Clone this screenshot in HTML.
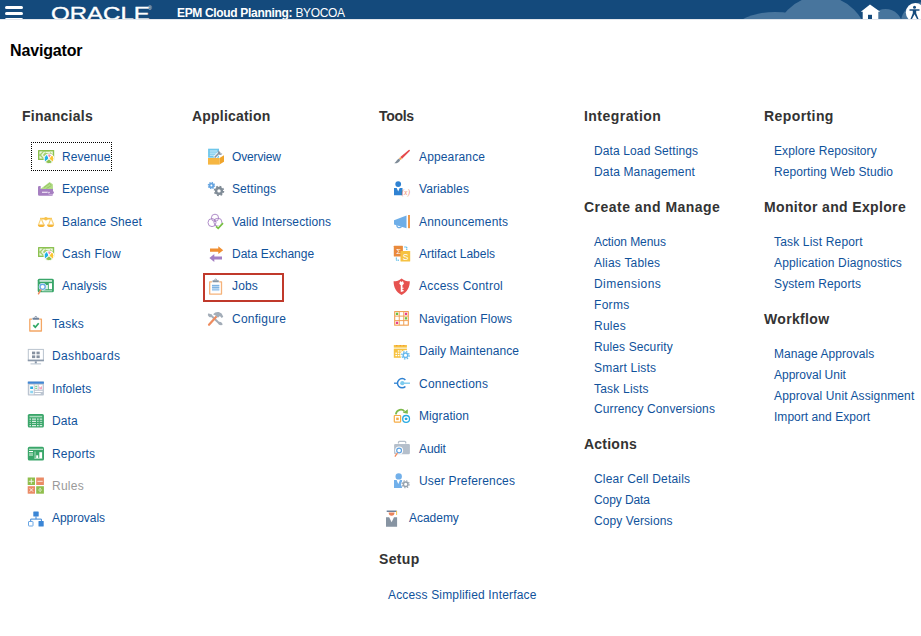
<!DOCTYPE html>
<html><head><meta charset="utf-8"><title>Navigator</title>
<style>
html,body{margin:0;padding:0;background:#fff;}
body{width:921px;height:636px;position:relative;overflow:hidden;font-family:"Liberation Sans",Arial,sans-serif;}
.hdr{position:absolute;left:0;top:0;width:921px;height:19px;background:#144a7c;overflow:hidden;}
.l{position:absolute;font-size:12px;line-height:14px;color:#10529b;white-space:nowrap;}
.d{color:#9a9a9a;}
.h{position:absolute;font-size:14px;line-height:16px;font-weight:bold;color:#333;white-space:nowrap;}
.nav{position:absolute;left:10px;top:42px;letter-spacing:-0.150px;font-size:16px;line-height:18px;font-weight:bold;color:#000;}
.ht{position:absolute;top:5.500px;left:177px;font-size:12px;line-height:14px;color:#fff;white-space:nowrap;}
.ht b{font-weight:bold;letter-spacing:-0.33px;}
.ht span{position:absolute;left:118.400px;top:0;letter-spacing:-0.35px;}
.logo{position:absolute;left:50.500px;top:4.600px;font-size:18px;line-height:19px;color:#fff;transform-origin:0 0;transform:scale(1.335,1);white-space:nowrap;-webkit-text-stroke:0.350px #fff;}
.reg{position:absolute;left:148px;top:5px;font-size:5px;line-height:6px;color:#fff;}
.focus{position:absolute;left:31px;top:142px;width:79px;height:27px;border:1px dotted #000;}
.sel{position:absolute;left:203px;top:273px;width:77px;height:25px;border:2px solid #c0392b;box-sizing:content-box;}
svg.i{position:absolute;overflow:visible;}
</style></head><body>
<div class="hdr">
<svg width="921" height="19" viewBox="0 0 921 19" style="position:absolute;left:0;top:0">
<g fill="#48759d">
<ellipse cx="775" cy="31" rx="41" ry="19"/>
<circle cx="821" cy="42.800" r="46.900"/>
<circle cx="885.500" cy="26" r="17"/>
<ellipse cx="925" cy="22" rx="24" ry="20"/>
</g>
<g fill="#fff">
<rect x="5" y="6" width="18" height="3" rx="1.500"/>
<rect x="5" y="12" width="18" height="3" rx="1.500"/>
<rect x="5" y="18" width="18" height="3" rx="1.500"/>
<path d="M870 4.500 860.800 11.800h1.900V19h15.600v-7.200h1.900z"/>
<circle cx="915.300" cy="12.500" r="9.500"/>
</g>
<rect x="868" y="14.800" width="4" height="4.200" fill="#144a7c"/>
<g fill="#144a7c" stroke="none">
<circle cx="914.500" cy="7.200" r="1.500"/>
<path d="M909.500 9.300h10v1.400h-3.300v2.600l2.300 5.700h-1.500l-2.500-4.800-2.500 4.800h-1.500l2.300-5.700v-2.600h-3.300z"/>
</g>
</svg>
<div class="logo">ORACLE</div><div class="reg">®</div>
<div class="ht"><b>EPM Cloud Planning:</b> <span>BYOCOA</span></div>
</div>
<div style="position:absolute;left:0;top:19px;width:921px;height:1px;background:#e3e7ed"></div>
<div class="nav">Navigator</div>
<div class="focus"></div>
<div class="sel"></div>
<div class="h" style="left:22px;top:108px;letter-spacing:0.248px">Financials</div>
<div class="l" style="left:62px;top:150px;letter-spacing:0.050px">Revenue</div>
<div class="l" style="left:62px;top:182px;letter-spacing:0.076px">Expense</div>
<div class="l" style="left:62px;top:215px;letter-spacing:0.149px">Balance Sheet</div>
<div class="l" style="left:62px;top:247px;letter-spacing:0.248px">Cash Flow</div>
<div class="l" style="left:62px;top:279px;letter-spacing:0.022px">Analysis</div>
<div class="l" style="left:52px;top:317px;letter-spacing:0.249px">Tasks</div>
<div class="l" style="left:52px;top:349px;letter-spacing:0.361px">Dashboards</div>
<div class="l" style="left:52px;top:382px;letter-spacing:0.068px">Infolets</div>
<div class="l" style="left:52px;top:414px;letter-spacing:0.096px">Data</div>
<div class="l" style="left:52px;top:447px;letter-spacing:0.173px">Reports</div>
<div class="l d" style="left:52px;top:479px;letter-spacing:0.264px">Rules</div>
<div class="l" style="left:52px;top:511px;letter-spacing:-0.031px">Approvals</div>
<div class="h" style="left:192px;top:108px;letter-spacing:0.198px">Application</div>
<div class="l" style="left:232px;top:150px;letter-spacing:-0.155px">Overview</div>
<div class="l" style="left:232px;top:182px;letter-spacing:0.080px">Settings</div>
<div class="l" style="left:232px;top:215px;letter-spacing:0.103px">Valid Intersections</div>
<div class="l" style="left:232px;top:247px;letter-spacing:0.007px">Data Exchange</div>
<div class="l" style="left:232px;top:279px;letter-spacing:0.163px">Jobs</div>
<div class="l" style="left:232px;top:312px;letter-spacing:0.246px">Configure</div>
<div class="h" style="left:379px;top:108px;letter-spacing:-0.283px">Tools</div>
<div class="l" style="left:419px;top:150px;letter-spacing:0.138px">Appearance</div>
<div class="l" style="left:419px;top:182px;letter-spacing:0.094px">Variables</div>
<div class="l" style="left:419px;top:215px;letter-spacing:0.192px">Announcements</div>
<div class="l" style="left:419px;top:247px;letter-spacing:0.006px">Artifact Labels</div>
<div class="l" style="left:419px;top:279px;letter-spacing:0.232px">Access Control</div>
<div class="l" style="left:419px;top:312px;letter-spacing:0.115px">Navigation Flows</div>
<div class="l" style="left:419px;top:344px;letter-spacing:0.081px">Daily Maintenance</div>
<div class="l" style="left:419px;top:377px;letter-spacing:0.228px">Connections</div>
<div class="l" style="left:419px;top:409px;letter-spacing:0.085px">Migration</div>
<div class="l" style="left:419px;top:442px;letter-spacing:-0.120px">Audit</div>
<div class="l" style="left:419px;top:474px;letter-spacing:0.169px">User Preferences</div>
<div class="l" style="left:409px;top:511px;letter-spacing:-0.027px">Academy</div>
<div class="h" style="left:379px;top:551px;letter-spacing:0.328px">Setup</div>
<div class="l" style="left:388px;top:588px;letter-spacing:0.165px">Access Simplified Interface</div>
<div class="h" style="left:584px;top:108px;letter-spacing:0.457px">Integration</div>
<div class="l" style="left:594px;top:144px;letter-spacing:0.120px">Data Load Settings</div>
<div class="l" style="left:594px;top:165px;letter-spacing:0.152px">Data Management</div>
<div class="h" style="left:584px;top:199px;letter-spacing:0.470px">Create and Manage</div>
<div class="l" style="left:594px;top:235px;letter-spacing:-0.074px">Action Menus</div>
<div class="l" style="left:594px;top:256px;letter-spacing:0.209px">Alias Tables</div>
<div class="l" style="left:594px;top:277px;letter-spacing:0.453px">Dimensions</div>
<div class="l" style="left:594px;top:298px;letter-spacing:0.301px">Forms</div>
<div class="l" style="left:594px;top:319px;letter-spacing:0.264px">Rules</div>
<div class="l" style="left:594px;top:340px;letter-spacing:0.102px">Rules Security</div>
<div class="l" style="left:594px;top:361px;letter-spacing:0.199px">Smart Lists</div>
<div class="l" style="left:594px;top:382px;letter-spacing:0.200px">Task Lists</div>
<div class="l" style="left:594px;top:402px;letter-spacing:0.114px">Currency Conversions</div>
<div class="h" style="left:584px;top:436px;letter-spacing:0.227px">Actions</div>
<div class="l" style="left:594px;top:472px;letter-spacing:0.197px">Clear Cell Details</div>
<div class="l" style="left:594px;top:493px;letter-spacing:-0.082px">Copy Data</div>
<div class="l" style="left:594px;top:514px;letter-spacing:0.085px">Copy Versions</div>
<div class="h" style="left:764px;top:108px;letter-spacing:0.412px">Reporting</div>
<div class="l" style="left:774px;top:144px;letter-spacing:0.077px">Explore Repository</div>
<div class="l" style="left:774px;top:165px;letter-spacing:0.088px">Reporting Web Studio</div>
<div class="h" style="left:764px;top:199px;letter-spacing:0.353px">Monitor and Explore</div>
<div class="l" style="left:774px;top:235px;letter-spacing:0.173px">Task List Report</div>
<div class="l" style="left:774px;top:256px;letter-spacing:0.171px">Application Diagnostics</div>
<div class="l" style="left:774px;top:277px;letter-spacing:0.123px">System Reports</div>
<div class="h" style="left:764px;top:311px;letter-spacing:0.330px">Workflow</div>
<div class="l" style="left:774px;top:347px;letter-spacing:0.054px">Manage Approvals</div>
<div class="l" style="left:774px;top:368px;letter-spacing:-0.009px">Approval Unit</div>
<div class="l" style="left:774px;top:389px;letter-spacing:0.124px">Approval Unit Assignment</div>
<div class="l" style="left:774px;top:410px;letter-spacing:0.040px">Import and Export</div>
<svg class="i" width="921" height="636" viewBox="0 0 921 636" style="left:0;top:0">
<defs>
<g id="money">
<rect x="0" y="0" width="16.200" height="10" rx="0.500" fill="#8cc152"/>
<rect x="1.200" y="1.200" width="13.800" height="7.600" fill="#a4d070"/>
<path d="M1.500 1.600h3.200l-3.200 3zM14.700 1.600v3l-3.200-3zM1.500 8.400v-3l3.200 3z" fill="#eef7e2"/>
<path d="M6.600 2 4 5 6.600 8M7.500 2.300h4.500" stroke="#eef7e2" stroke-width="1.300" fill="none"/>
<circle cx="11" cy="8.800" r="5.300" fill="#fff"/>
<g stroke="#fff" stroke-width="0.900" stroke-linejoin="round">
<path d="M11 8.800 9.400 4.300A4.800 4.800 0 0 0 7.300 11.900z" fill="#1fb0e6"/>
<path d="M11 8.800 9.400 4.300A4.800 4.800 0 0 1 13.800 4.900z" fill="#f48fb1"/>
<path d="M11 8.800 13.800 4.900A4.800 4.800 0 0 1 14.500 12.100z" fill="#fbc531"/>
<path d="M11 8.800 14.500 12.100A4.800 4.800 0 0 1 7.300 11.900z" fill="#8cc152"/>
</g>
</g>
</defs>
<!-- Revenue -->
<use href="#money" x="38" y="150"/>
<!-- Expense -->
<g>
<path d="M40.800 188.800 49.600 181.900 52.800 184.300 53 189.500H40.800z" fill="#b2db88"/>
<path d="M44 187.500 49.500 183.500 51.500 185.200M46.500 188.500 51 185.800" stroke="#8cc152" stroke-width="0.900" fill="none" opacity=".8"/>
<path d="M38 187.300a1.300 1.300 0 0 1 1.300-1.300h1.400v3h12.300v5.400a1.400 1.400 0 0 1-1.400 1.400H39.400a1.400 1.400 0 0 1-1.400-1.400z" fill="#a67fc1"/>
<rect x="42" y="191.700" width="6.200" height="1.200" fill="#efe6f5"/>
<rect x="47.600" y="191.200" width="6.300" height="2.600" rx="1.200" fill="#a67fc1"/>
<circle cx="49" cy="192.400" r="0.700" fill="#fff"/>
<path d="M48.200 193.600c1 1 3 1.100 4.800 0.800" stroke="#e3d5ee" stroke-width="0.600" fill="none"/>
</g>
<!-- Balance Sheet -->
<g fill="#f7c24a">
<rect x="40" y="217.800" width="12" height="1.700"/>
<circle cx="45.900" cy="218.700" r="1.800"/>
<path d="M40.300 218.500 38 224.500h1.200L41 219.800 43 224.500h1.400L41.800 218.500zM50.300 218.500 48 224.500h1.200L51 219.800 53 224.500h1.400L51.800 218.500z" fill="#fad47a"/>
<path d="M37.800 224.500h7a3.500 2.600 0 0 1-7 0zM47 224.500h7a3.500 2.600 0 0 1-7 0z" fill="#f5b63a"/>
</g>
<!-- Cash Flow -->
<use href="#money" x="38" y="247"/>
<!-- Analysis -->
<g>
<rect x="37.700" y="278.800" width="16.200" height="13.500" rx="1.500" fill="#3aa66a"/>
<rect x="39.500" y="280.300" width="12.500" height="1.300" fill="#fff"/>
<rect x="48.800" y="283.200" width="3.200" height="6" fill="#fff"/>
<rect x="46" y="285" width="2" height="4.200" fill="#d5eede"/>
<rect x="42" y="290.300" width="10" height="1" fill="#bfe3cd"/>
<circle cx="42.600" cy="286.800" r="3.800" fill="#fff"/>
<circle cx="42.600" cy="286.800" r="2.600" fill="#fff" stroke="#6aa9e6" stroke-width="1.400"/>
<path d="M40.800 289.800 38.500 293.800" stroke="#f08a5d" stroke-width="1.500" stroke-linecap="round"/>
</g>
<!-- Tasks -->
<g>
<path d="M32 319.200h-2.200v11.800h11.600v-11.800h-2.200" fill="none" stroke="#f4a765" stroke-width="1.300" stroke-linejoin="round"/>
<rect x="32.500" y="317.700" width="6.600" height="2" rx="0.400" fill="#6f8199"/>
<path d="M34.700 317.700a1.100 1.300 0 0 1 2.200 0" fill="none" stroke="#6f8199" stroke-width="0.800"/>
<path d="M33.300 325.200 35.300 327.200 38.700 323.200" fill="none" stroke="#2fa866" stroke-width="1.700"/>
</g>
<!-- Dashboards -->
<g>
<rect x="28.300" y="349.400" width="15.100" height="11" fill="#fff" stroke="#bac4cf" stroke-width="1"/>
<rect x="27.800" y="359.600" width="16.100" height="1.700" fill="#8a98aa"/>
<rect x="32" y="351.600" width="3.200" height="2.700" fill="#8791a0"/>
<rect x="36.500" y="351.600" width="3.200" height="2.700" fill="#8791a0"/>
<rect x="32" y="355.400" width="3.200" height="2.700" fill="#8791a0"/>
<rect x="36.500" y="355.400" width="3.200" height="2.700" fill="#8791a0"/>
<rect x="34.800" y="361.300" width="2" height="2.200" fill="#8a98aa"/>
<rect x="30.500" y="363.400" width="10.600" height="1" fill="#b5c0cc"/>
</g>
<!-- Infolets -->
<g>
<rect x="27.800" y="381.600" width="16.100" height="14" rx="0.800" fill="#bcc5d1"/>
<rect x="27.800" y="381.600" width="16.100" height="2.100" fill="#3f87d6"/>
<rect x="29.300" y="384.700" width="4.400" height="9.600" fill="#fff"/>
<rect x="34.700" y="384.700" width="3" height="5" fill="#fff"/>
<rect x="38.700" y="384.700" width="3.900" height="5" fill="#fff"/>
<rect x="34.700" y="390.800" width="7.900" height="1.200" fill="#fff"/>
<rect x="34.700" y="393" width="6" height="1.100" fill="#fff"/>
<path d="M30.200 386.500h2.800v2.500h-2.800z" fill="#29abe2"/>
<rect x="30.200" y="390.800" width="2.800" height="0.900" fill="#5bc4ec"/>
<rect x="30.200" y="392.300" width="2.800" height="0.900" fill="#5bc4ec"/>
<rect x="35.200" y="385.800" width="2" height="0.900" fill="#4cbf6b"/>
<rect x="35.200" y="387.800" width="2" height="0.900" fill="#4cbf6b"/>
<path d="M39.300 389.200v-3l1.300 1.200 1.400-1.600v3.400z" fill="#f6a5bd"/>
</g>
<!-- Data -->
<g>
<rect x="27.800" y="413.900" width="16.100" height="13.600" rx="1.600" fill="#3aa66a"/>
<rect x="29.500" y="415.800" width="12.700" height="1.500" fill="#a9dcbd"/>
<g fill="#fff">
<rect x="29.500" y="418.600" width="1.500" height="1"/><rect x="32" y="418.600" width="4" height="1"/><rect x="37" y="418.600" width="1.700" height="1"/><rect x="39.700" y="418.600" width="2.500" height="1"/>
<rect x="29.500" y="420.800" width="1.500" height="1" opacity=".6"/><rect x="32" y="420.800" width="4" height="1"/><rect x="37" y="420.800" width="1.700" height="1" opacity=".7"/><rect x="39.700" y="420.800" width="2.500" height="1" opacity=".7"/>
<rect x="29.500" y="423" width="1.500" height="1" opacity=".5"/><rect x="32" y="423" width="4" height="1" opacity=".6"/><rect x="37" y="423" width="1.700" height="1" opacity=".5"/><rect x="39.700" y="423" width="2.500" height="1" opacity=".5"/>
<rect x="29.500" y="425.200" width="1.500" height="1"/><rect x="32" y="425.200" width="4" height="1"/><rect x="37" y="425.200" width="1.700" height="1"/><rect x="39.700" y="425.200" width="2.500" height="1"/>
</g>
</g>
<!-- Reports -->
<g>
<rect x="27.800" y="446.800" width="16.200" height="13.700" rx="1.600" fill="#3aa66a"/>
<rect x="29" y="448.700" width="14" height="1.200" fill="#c5e8d3"/>
<rect x="29" y="451" width="4" height="1.100" fill="#fff"/>
<rect x="29" y="453" width="4" height="3" fill="#8fd0aa"/>
<rect x="34.500" y="451.500" width="1.100" height="7.200" fill="#9dd6b5"/>
<rect x="34.500" y="457.800" width="7.800" height="1" fill="#b5e0c7"/>
<rect x="39.300" y="452.200" width="2.800" height="5.900" fill="#fff"/>
<rect x="36.200" y="455.300" width="2" height="2.800" fill="#fff"/>
</g>
<!-- Rules -->
<g>
<rect x="27.700" y="477.500" width="7.300" height="7.500" fill="#8fbe4d"/>
<rect x="36.200" y="477.500" width="7.700" height="7.500" fill="#ea8b66"/>
<rect x="27.700" y="486.200" width="7.300" height="7.500" fill="#ea8b66"/>
<rect x="36.200" y="486.200" width="7.700" height="7.500" fill="#8fbe4d"/>
<path d="M31.300 478.800v5M28.800 481.300h5" stroke="#fff" stroke-width="0.900" opacity=".9"/>
<path d="M37.400 481.300h5.300" stroke="#fff" stroke-width="0.900" opacity=".9"/>
<path d="M29.700 488.200l3.400 3.500M33.100 488.200l-3.400 3.500" stroke="#fff" stroke-width="1" opacity=".85"/>
<path d="M38.300 490h3.600" stroke="#fff" stroke-width="0.900" opacity=".85"/>
<circle cx="40.100" cy="488.400" r="0.650" fill="#fff" opacity=".85"/><circle cx="40.100" cy="491.600" r="0.650" fill="#fff" opacity=".85"/>
</g>
<!-- Approvals -->
<g>
<rect x="33.300" y="511.400" width="5.400" height="5.100" rx="0.500" fill="#3b86d6"/>
<path d="M36 516.400v2.700M30.700 521.200v-2.100h10.700v2.100" fill="none" stroke="#3b86d6" stroke-width="1"/>
<rect x="28.500" y="521.500" width="4.500" height="4.500" rx="0.400" fill="#fff" stroke="#6aa6e4" stroke-width="1"/>
<rect x="38.500" y="521" width="5.200" height="5.400" rx="0.500" fill="#3b86d6"/>
</g>

<!-- Overview -->
<g>
<rect x="208.100" y="148.700" width="10.900" height="9" fill="#6ec6ea"/>
<rect x="209.800" y="150.500" width="7.500" height="1" fill="#d9f0fa"/>
<rect x="209.800" y="152.600" width="7.500" height="1" fill="#d9f0fa"/>
<rect x="209.800" y="154.700" width="6" height="1" fill="#d9f0fa"/>
<path d="M214.500 157.700 220 152" stroke="#fff" stroke-width="3.200"/>
<path d="M214.700 157.500 220 152" stroke="#8795a3" stroke-width="1.700"/>
<path d="M219 150.600a2.300 2.300 0 1 0 3.300 2.800l-1.800 0.200-1-1.300z" fill="#8795a3"/>
<rect x="208" y="158" width="11.500" height="6.600" fill="#f6b642"/>
<path d="M219.500 158 224 155.200v6.500L219.500 164.600z" fill="#f0a52b"/>
</g>
<!-- Settings -->
<g>
<circle cx="211.400" cy="185.500" r="1.900" fill="none" stroke="#67a5e0" stroke-width="1.900"/>
<circle cx="211.400" cy="185.500" r="3.100" fill="none" stroke="#67a5e0" stroke-width="1.200" stroke-dasharray="1.210 1.225"/>
<circle cx="219" cy="190.900" r="2.900" fill="none" stroke="#808c97" stroke-width="2.400"/>
<circle cx="219" cy="190.900" r="4.500" fill="none" stroke="#808c97" stroke-width="1.500" stroke-dasharray="1.770 1.765"/>
</g>
<!-- Valid Intersections -->
<g fill="none" stroke="#a27abf" stroke-width="0.850">
<circle cx="215" cy="217.800" r="3.600"/>
<circle cx="212" cy="222.600" r="4"/>
<circle cx="217.900" cy="222.200" r="4"/>
<path d="M214 229h8v-6z" fill="#fff" stroke="none"/>
<path d="M216 226.300 218.200 228.400 223 223.200" stroke="#78c043" stroke-width="1.700"/>
</g>
<!-- Data Exchange -->
<g>
<path d="M210 248.600h8.300v-2.300l4.900 3.900-4.900 3.900v-2.400h-8.300z" fill="#f08f32"/>
<path d="M222 256.500h-7.700v-2.400l-4.900 3.900 4.900 3.900v-2.300h7.700z" fill="#a37fc4"/>
</g>
<!-- Jobs -->
<g>
<path d="M212 281.800h-2.300v12.300h11.800v-12.300h-2.300" fill="none" stroke="#f5b27a" stroke-width="1.300" stroke-linejoin="round"/>
<rect x="212.500" y="280.300" width="6.300" height="2" rx="0.400" fill="#8795a3"/>
<path d="M214.600 280.300a1.100 1.300 0 0 1 2.200 0" fill="none" stroke="#8795a3" stroke-width="0.800"/>
<rect x="212" y="284.500" width="7.300" height="6.600" fill="#cfe3f6"/>
<rect x="212" y="285.300" width="7.300" height="0.900" fill="#5d9fdc"/>
<rect x="212" y="287.300" width="7.300" height="0.900" fill="#5d9fdc"/>
<rect x="212" y="289.300" width="7.300" height="0.900" fill="#8dbce8"/>
</g>
<!-- Configure -->
<g>
<path d="M210.500 315 220 324" stroke="#a3adb8" stroke-width="1.900"/>
<path d="M208 313.600a2.700 2.700 0 0 0 4.300 3l-0.600-2.200-2-0.600zM222.500 325a2.700 2.700 0 0 0-4.300-2.600l0.600 2.200 1.900 0.700z" fill="#a3adb8"/>
<path d="M209 324.800 216 317" stroke="#ee8b5e" stroke-width="2.200" stroke-linecap="round"/>
<path d="M213 314.300c2.200-2.800 6-3.300 8.600-0.800l1.700 3.300-1.600 1.300-1.800-2.200-2 1.900-2.400-2.200z" fill="#a3adb8"/>
</g>

<!-- Appearance -->
<g>
<path d="M400.300 156.900 408.700 149.900a0.800 0.800 0 0 1 1.100 1.100L402.100 158.700z" fill="#e5494b"/>
<path d="M399.600 157.700 401.300 159.400" stroke="#f0953a" stroke-width="1.600"/>
<path d="M399 158.600c-1.700 0.600-2.300 2.800-4.700 4.600 2.600 0.200 5-0.800 5.900-3.300z" fill="#7f8c98"/>
</g>
<!-- Variables -->
<g>
<circle cx="398.200" cy="184.100" r="2.900" fill="#2f82d2"/>
<path d="M394 188h2.700l1.500 3.500 1.500-3.500h2.800v7.200h-8.500z" fill="#2f82d2"/>
<text x="401.500" y="194.800" font-family="Liberation Serif,serif" font-style="italic" font-size="8" fill="#f08c6c" textLength="8.500" lengthAdjust="spacingAndGlyphs">(x)</text>
</g>
<!-- Announcements -->
<g>
<path d="M394 220.300 406.500 215.500v12.700L394 224.600z" fill="#6eaee8"/>
<path d="M397 225a2.300 2 0 0 0 4.500 1.200" fill="none" stroke="#6eaee8" stroke-width="1.300"/>
<rect x="408" y="215" width="2" height="13.200" fill="#f09a4c"/>
</g>
<!-- Artifact Labels -->
<g>
<path d="M404.300 247h2.500v3M399 260.200h-2.700v-2.700" fill="none" stroke="#45b3e5" stroke-width="1" stroke-dasharray="1.500 0.500"/>
<rect x="393.800" y="245.700" width="9.100" height="10.900" rx="0.600" fill="#e98a3c"/>
<text x="396.200" y="254" font-family="Liberation Sans,sans-serif" font-size="7.500" fill="#fff">Σ</text>
<rect x="400.500" y="250.900" width="9.700" height="10.700" rx="0.600" fill="#f6c242"/>
<text x="402.800" y="259.600" font-family="Liberation Sans,sans-serif" font-size="8.500" fill="#fff">S</text>
</g>
<!-- Access Control -->
<g>
<path d="M401.600 278.500c-2.400 2-5 2.800-8 2.800 0 6 2.400 10.800 8 13.600 5.600-2.800 8.200-7.600 8.200-13.600-3.100 0-5.800-0.800-8.200-2.800z" fill="#e6524f"/>
<circle cx="401.600" cy="283.200" r="2.100" fill="#fff"/>
<path d="M400.500 280.500 401.600 282.300 402.700 280.500z" fill="#e6524f"/>
<path d="M401.600 284v7.800" stroke="#fff" stroke-width="1.700"/><path d="M401.600 288.300h2M401.600 290.600h2" stroke="#fff" stroke-width="1.100"/>
</g>
<!-- Navigation Flows -->
<g>
<rect x="394.100" y="310.900" width="14.800" height="14.900" rx="0.600" fill="#f1a257"/>
<rect x="395.25" y="312.10" width="3.500" height="3.500" fill="#fff"/>
<rect x="395.85" y="312.70" width="2.300" height="2.300" fill="#6fbf3f"/>
<rect x="399.75" y="312.10" width="3.500" height="3.500" fill="#fff"/>
<rect x="404.25" y="312.10" width="3.500" height="3.500" fill="#fff"/>
<rect x="404.85" y="312.70" width="2.300" height="2.300" fill="#e83e8c"/>
<rect x="395.25" y="316.60" width="3.500" height="3.500" fill="#fff"/>
<rect x="399.75" y="316.60" width="3.500" height="3.500" fill="#fff"/>
<rect x="404.25" y="316.60" width="3.500" height="3.500" fill="#fff"/>
<rect x="404.85" y="317.20" width="2.300" height="2.300" fill="#6fbf3f"/>
<rect x="395.25" y="321.10" width="3.500" height="3.500" fill="#fff"/>
<rect x="395.85" y="321.70" width="2.300" height="2.300" fill="#e83e8c"/>
<rect x="399.75" y="321.10" width="3.500" height="3.500" fill="#fff"/>
<rect x="404.25" y="321.10" width="3.500" height="3.500" fill="#fff"/>
</g>
<!-- Daily Maintenance -->
<g>
<rect x="393.800" y="345" width="13.100" height="2.600" fill="#f6c242"/>
<circle cx="396.800" cy="345.600" r="0.700" fill="#ef8b3a"/><circle cx="400.300" cy="345.600" r="0.700" fill="#ef8b3a"/><circle cx="403.800" cy="345.600" r="0.700" fill="#ef8b3a"/>
<rect x="393.800" y="348.600" width="13.100" height="9.200" fill="#f6c242"/>
<g fill="#fff"><rect x="397.800" y="350.300" width="1.600" height="1.300"/><rect x="400.200" y="350.300" width="1.600" height="1.300"/><rect x="395.400" y="352.600" width="1.600" height="1.300"/><rect x="397.800" y="352.600" width="1.600" height="1.300"/><rect x="400.200" y="352.600" width="1.600" height="1.300"/><rect x="395.400" y="354.900" width="1.600" height="1.300"/><rect x="397.800" y="354.900" width="1.600" height="1.300"/></g>
<circle cx="405.500" cy="355.300" r="5.200" fill="#fff"/>
<circle cx="405.500" cy="355.300" r="2.300" fill="none" stroke="#68b9ec" stroke-width="1.500"/>
<circle cx="405.500" cy="355.300" r="3.700" fill="none" stroke="#68b9ec" stroke-width="1.300" stroke-dasharray="1.450 1.455"/>
</g>
<!-- Connections -->
<g>
<path d="M405.400 380a4.600 4.600 0 1 0 0 6.400" fill="none" stroke="#2f82d2" stroke-width="1.500"/>
<path d="M394 383.200h3.500" stroke="#2f82d2" stroke-width="1.300"/>
<circle cx="402.300" cy="383.200" r="2.100" fill="#7ecbee"/>
<path d="M402.300 383.200h7.700" stroke="#7ecbee" stroke-width="1.400"/>
</g>
<!-- Migration -->
<g>
<path d="M395.800 414.300c0.800-5 6.500-5.800 8.700-2.800" fill="none" stroke="#7db94a" stroke-width="1.700"/>
<path d="M402.700 412.700 407.800 409.200 407.800 413.800z" fill="#7db94a"/>
<rect x="394.300" y="415.500" width="6.300" height="6.600" rx="0.500" fill="#fff" stroke="#f6ac45" stroke-width="1.200"/>
<rect x="396.200" y="417.600" width="2.500" height="2.500" fill="#f6ac45"/>
<circle cx="406.100" cy="418.900" r="3.400" fill="#fff" stroke="#29abe2" stroke-width="1.300"/>
<rect x="404.900" y="417.700" width="2.400" height="2.400" rx="0.500" fill="#29abe2"/>
</g>
<!-- Audit -->
<g>
<path d="M398.500 443.500v-1.200a0.900 0.900 0 0 1 0.900-0.900h5.400a0.900 0.900 0 0 1 0.900 0.900v1.200" fill="none" stroke="#b5bfcb" stroke-width="1.300"/>
<rect x="394.100" y="443.900" width="15.800" height="10.400" rx="1.200" fill="#b5bfcb"/>
<circle cx="399.100" cy="450.500" r="4" fill="#fff"/>
<circle cx="399.100" cy="450.500" r="2.400" fill="#fff" stroke="#5ea3e2" stroke-width="1.200"/>
<path d="M397.200 453.300 395.200 456.200" stroke="#f08a5d" stroke-width="1.300" stroke-linecap="round"/>
</g>
<!-- User Preferences -->
<g>
<circle cx="398.700" cy="476.400" r="3.200" fill="#72b0ea"/>
<path d="M394 480h2.600l1.700 4 1.700-4h2.100v8h-8.100z" fill="#72b0ea"/>
<circle cx="405.700" cy="484.200" r="4.600" fill="#fff"/>
<circle cx="405.700" cy="484.200" r="2.300" fill="none" stroke="#96a2ae" stroke-width="1.500"/>
<circle cx="405.700" cy="484.200" r="3.500" fill="none" stroke="#96a2ae" stroke-width="1.100" stroke-dasharray="1.370 1.380"/>
</g>
<!-- Academy -->
<g>
<rect x="386.700" y="510.500" width="10" height="1.500" fill="#6f8199"/>
<path d="M396.600 511v4" stroke="#f6c242" stroke-width="0.900"/>
<path d="M388.700 512.500h5.800a2.900 3.300 0 0 1-5.800 0z" fill="#ea835c"/>
<path d="M386 517.300h3.200l2.400 5 2.400-5h3.100v9.400H386z" fill="#8794a2"/>
</g>
</svg>

</body></html>
